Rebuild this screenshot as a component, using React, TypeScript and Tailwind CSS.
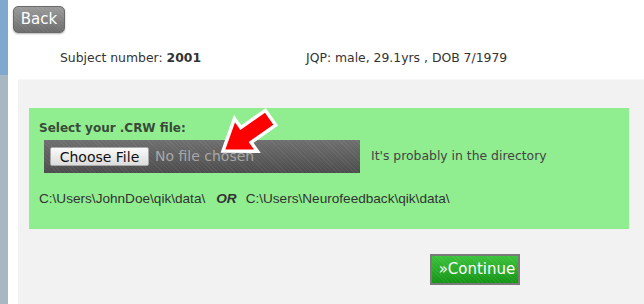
import React from 'react';

const verdana = '[font-family:Verdana,"DejaVu_Sans",sans-serif]';

function RedArrow() {
  return (
    <svg
      className="absolute left-0 top-0 pointer-events-none"
      width="644"
      height="304"
      viewBox="0 0 644 304"
    >
      <g transform="translate(223,151) rotate(-35)">
        <polygon
          points="0,0 28,-20 28,-9 58,-9 58,9 28,9 28,20"
          fill="#ff0000"
          stroke="#ffffff"
          strokeWidth="3.5"
          strokeLinejoin="miter"
        />
      </g>
    </svg>
  );
}

export default function App() {
  return (
    <div className={`relative w-[644px] h-[304px] overflow-hidden bg-white flex ${verdana}`}>
      {/* left strip */}
      <div className="w-[8px] flex flex-col shrink-0">
        <div className="h-[75px] bg-[#7fa8cf]" />
        <div className="flex-1 bg-[#a7b8c3]" />
      </div>

      <div className="flex-1 flex flex-col">
        <div className="pl-[5px] pt-[6px]">
          <button className="h-[27px] w-[52px] rounded-[5px] border border-[#6a6a6a] text-white text-[15px] leading-none [background-image:repeating-linear-gradient(45deg,rgba(255,255,255,0.06)_0px,rgba(255,255,255,0.06)_1px,transparent_1px,transparent_3px),linear-gradient(#9a9a9a,#6c6c6c)] shadow-[0_1px_2px_rgba(0,0,0,0.3)]">
            Back
          </button>
        </div>

        <div className="h-[46px] pt-[17px] flex text-[12.4px] leading-[16px] text-[#333]">
          <div className="ml-[52px] w-[246px]">
            Subject number: <b>2001</b>
          </div>
          <div>JQP: male, 29.1yrs , DOB 7/1979</div>
        </div>

        <div className="flex-1 ml-[10px] bg-[#f2f2f2] border-t border-[#f8f8f8] pt-[28px] pl-[11px]">
          <div className="w-[600px] h-[121px] bg-[#90ee90] pt-[12px] pl-[10px]">
            <div className="text-[12px] leading-[16px] font-bold text-[#394a39]">
              Select your .CRW file:
            </div>
            <div className="flex items-center mt-[4px]">
              <div className="ml-[5px] w-[316px] h-[33px] flex items-center pl-[6px] [background-image:repeating-linear-gradient(45deg,rgba(255,255,255,0.05)_0px,rgba(255,255,255,0.05)_1px,transparent_1px,transparent_3px),linear-gradient(#6f6f6f,#4c4c4c)]">
                <span className="h-[19px] w-[99px] flex items-center justify-center rounded-[2px] border border-[#a9a9a9] bg-gradient-to-b from-[#fafafa] to-[#dcdcdc] text-[14px] leading-none text-[#111]">
                  Choose File
                </span>
                <span className="ml-[6px] text-[14px] text-[#a8a8a8]">No file chosen</span>
              </div>
              <span className="ml-[11px] text-[12.4px] text-[#444]">It's probably in the directory</span>
            </div>
            <div className="mt-[18px] text-[13.6px] leading-[16px] text-[#333] [font-family:Arial,'Liberation_Sans',sans-serif] flex">
              <span>C:\Users\JohnDoe\qik\data\</span>
              <b className="italic ml-[11px] mr-[9px]">OR</b>
              <span>C:\Users\Neurofeedback\qik\data\</span>
            </div>
          </div>

          <div className="mt-[25px] ml-[401px]">
            <button className="h-[31px] w-[90px] border-2 border-[#7a7a7a] text-white text-[15px] leading-none pl-[4px] [background-image:repeating-linear-gradient(45deg,rgba(255,255,255,0.06)_0px,rgba(255,255,255,0.06)_1px,transparent_1px,transparent_3px),linear-gradient(#3bc23b,#159415)]">
              »Continue
            </button>
          </div>
        </div>
      </div>

      <RedArrow />
    </div>
  );
}
